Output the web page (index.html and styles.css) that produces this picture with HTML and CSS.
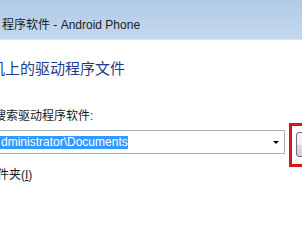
FILE: index.html
```html
<!DOCTYPE html>
<html lang="zh-CN">
<head>
<meta charset="utf-8">
<title>程序软件 - Android Phone</title>
<link rel="stylesheet" href="styles.css">
</head>
<body>
<div class="window">
  <div class="titlebar"><span class="title">程序软件 - Android Phone</span></div>
  <div class="content">
    <h1 class="heading">机上的驱动程序文件</h1>
    <div class="label">搜索驱动程序软件:</div>
    <div class="row">
      <div class="combo">
        <span class="sel">dministrator\Documents</span>
        <span class="arrow"></span>
      </div>
      <div class="btnwrap">
        <button class="browse"></button>
        <span class="mark"></span>
      </div>
    </div>
    <div class="check">件夹(<u>I</u>)</div>
  </div>
</div>
</body>
</html>
```
FILE: styles.css
```css
html, body {
  margin: 0;
  padding: 0;
  width: 302px;
  height: 227px;
  overflow: hidden;
  background: #ffffff;
}
.window {
  font-family: "Liberation Sans", "Noto Sans CJK SC", sans-serif;
  font-size: 12px;
  color: #1a1a1a;
}
.titlebar {
  box-sizing: border-box;
  height: 40px;
  padding-top: 17px;
  background: linear-gradient(#afc9e6, #c4d9ef);
  border-bottom: 1px solid #d8e5f3;
  white-space: nowrap;
}
.title {
  display: block;
  line-height: 16px;
  margin-left: 2px;
  color: #1c1c1c;
}
.content {
  white-space: nowrap;
}
.heading {
  margin: 19px 0 0 -10px;
  font-size: 15px;
  line-height: 20px;
  font-weight: normal;
  color: #1f3b8f;
}
.label {
  margin: 29px 0 0 -6px;
  line-height: 16px;
}
.row {
  display: flex;
  align-items: flex-start;
  gap: 4px;
  margin-top: 6px;
}
.combo {
  box-sizing: border-box;
  width: 288px;
  height: 24px;
  margin-left: -3px;
  flex: none;
  display: flex;
  align-items: center;
  justify-content: space-between;
  padding: 0 5px 0 2px;
  border: 1px solid #abb3bd;
  background: #fff;
}
.sel {
  line-height: 13px;
  padding-left: 1px;
  background: #3399ff;
  color: #fff;
}
.arrow {
  width: 0;
  height: 0;
  border-left: 3px solid transparent;
  border-right: 3px solid transparent;
  border-top: 3px solid #000;
  margin-top: 1px;
}
.btnwrap {
  position: relative;
  flex: none;
  margin-left: 7px;
  margin-top: 2px;
}
.browse {
  box-sizing: border-box;
  height: 25px;
  width: 80px;
  border: 1px solid #707070;
  border-radius: 3px;
  background: linear-gradient(#f2f2f2 50%, #dddddd 50%, #cfcfcf);
  padding: 0;
  display: block;
}
.mark {
  position: absolute;
  left: -7px;
  top: -9px;
  width: 90px;
  height: 44px;
  box-sizing: border-box;
  border: 3px solid #d7141a;
}
.check {
  margin: 10px 0 0 -3px;
  line-height: 16px;
}
```
